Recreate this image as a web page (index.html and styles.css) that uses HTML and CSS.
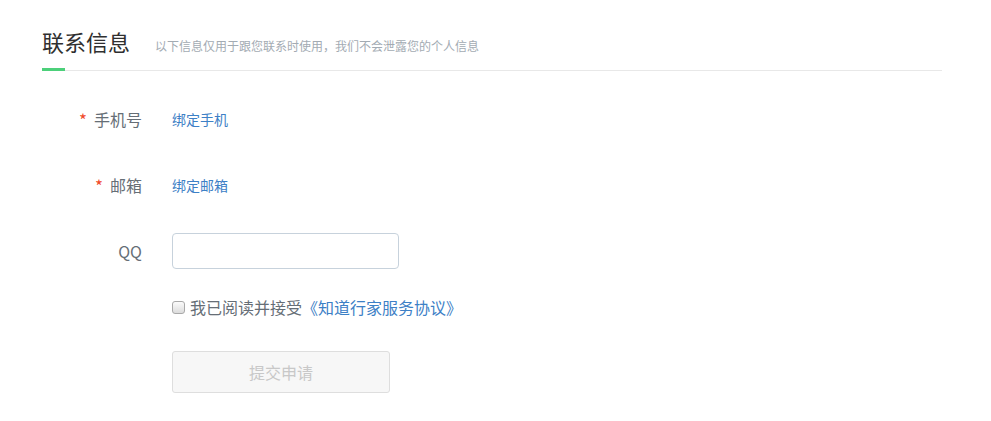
FILE: index.html
```html
<!DOCTYPE html>
<html lang="zh-CN">
<head>
<meta charset="utf-8">
<title>联系信息</title>
<link rel="stylesheet" href="styles.css">
</head>
<body>
<div class="page">
  <div class="header">
    <h2 class="title">联系信息</h2>
    <span class="subtitle">以下信息仅用于跟您联系时使用，我们不会泄露您的个人信息</span>
    <span class="title-bar"></span>
  </div>
  <form class="form">
    <div class="row">
      <label class="label"><span class="star">*</span>手机号</label>
      <div class="field"><a class="link" href="#">绑定手机</a></div>
    </div>
    <div class="row">
      <label class="label"><span class="star">*</span>邮箱</label>
      <div class="field"><a class="link" href="#">绑定邮箱</a></div>
    </div>
    <div class="row">
      <label class="label">QQ</label>
      <div class="field"><input class="input" type="text"></div>
    </div>
    <div class="agree-row">
      <label class="agree"><input class="check" type="checkbox"><span>我已阅读并接受</span><a class="agree-link" href="#">《知道行家服务协议》</a></label>
    </div>
    <div class="submit-row">
      <button class="submit" type="button" disabled>提交申请</button>
    </div>
  </form>
</div>
</body>
</html>
```

FILE: styles.css
```css
html, body {
  margin: 0;
  padding: 0;
  background: #ffffff;
}

body {
  font-family: "Noto Sans CJK SC", "Liberation Sans", sans-serif;
  color: #666;
}

.page {
  width: 900px;
  margin-left: 42px;
}

.header {
  position: relative;
  display: flex;
  align-items: baseline;
  padding-top: 26px;
  padding-bottom: 14px;
  border-bottom: 1px solid #e8e8e8;
}

.title {
  margin: 0;
  font-size: 22px;
  line-height: 30px;
  font-weight: normal;
  color: #2f2f2f;
}

.subtitle {
  margin-left: 25px;
  font-size: 12px;
  line-height: 16px;
  color: #a3abb3;
}

.title-bar {
  position: absolute;
  left: 0;
  bottom: -1px;
  width: 23px;
  height: 3px;
  background: #4cd07a;
}

.form {
  margin: 30px 0 0;
}

.row {
  display: flex;
  align-items: center;
  height: 36px;
  margin-bottom: 30px;
}

.label {
  width: 100px;
  margin-right: 30px;
  text-align: right;
  font-size: 16px;
  line-height: 20px;
  color: #666e76;
}

.star {
  color: #f04a2a;
  font-size: 17px;
  margin-right: 7px;
  position: relative;
  top: 1px;
}

.field {
  display: flex;
  align-items: center;
}

.link {
  font-size: 14px;
  line-height: 20px;
  color: #3d80c6;
  text-decoration: none;
}

.input {
  box-sizing: border-box;
  width: 227px;
  height: 36px;
  margin: 0;
  padding: 0 10px;
  border: 1px solid #c7d2dc;
  border-radius: 4px;
  background: #fff;
  font-size: 14px;
  outline: none;
}

.agree-row {
  display: flex;
  align-items: center;
  height: 18px;
  margin-left: 130px;
  margin-top: -1px;
}

.agree {
  display: flex;
  align-items: center;
  font-size: 16px;
  line-height: 18px;
  color: #666e76;
}

.check {
  appearance: none;
  -webkit-appearance: none;
  box-sizing: border-box;
  width: 13px;
  height: 13px;
  margin: 0 5px 0 0;
  border: 1px solid #a9a9a9;
  border-radius: 3px;
  background: linear-gradient(#fbfbfb, #dcdcdc);
}

.agree-link {
  color: #3d80c6;
  text-decoration: none;
}

.submit-row {
  margin-left: 130px;
  margin-top: 35px;
}

.submit {
  box-sizing: border-box;
  width: 218px;
  height: 42px;
  margin: 0;
  padding: 0;
  border: 1px solid #dedede;
  border-radius: 3px;
  background: #f7f7f7;
  font-family: "Noto Sans CJK SC", "Liberation Sans", sans-serif;
  font-size: 16px;
  color: #c8c8c8;
}
```
